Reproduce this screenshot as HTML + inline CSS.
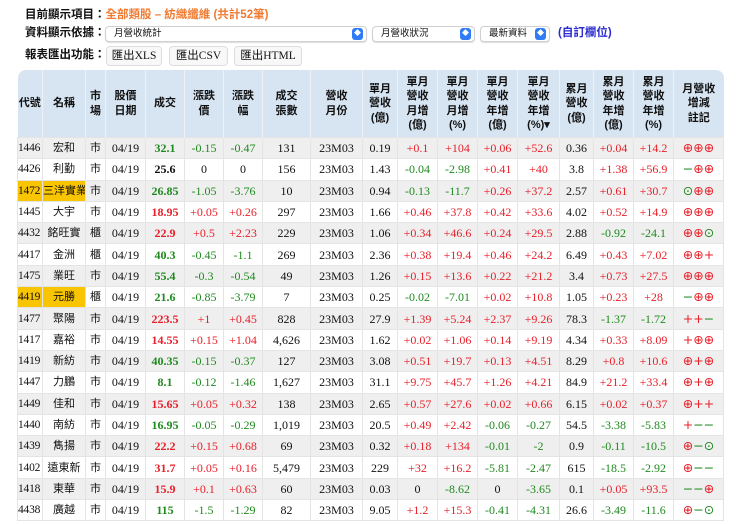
<!DOCTYPE html><html><head><meta charset="utf-8"><style>
body{margin:0;background:#fff;font-family:"Liberation Serif","Noto Serif CJK SC",serif;font-size:12px;color:#111;width:740px;height:524px;overflow:hidden;position:relative}
.l{position:absolute;font-family:"Liberation Sans","Noto Sans CJK TC",sans-serif;font-weight:bold;font-size:11.5px;left:25px;line-height:14px}
.sel{position:absolute;top:26px;height:14px;border:1px solid #d0d0d0;border-radius:4px;background:#fff;box-shadow:0 1px 1px #ddd;font-family:"Liberation Sans","Noto Sans CJK TC",sans-serif;font-size:9.5px;line-height:14px;padding-left:8px;box-sizing:content-box}
.sel i{position:absolute;right:3px;top:1px;width:11px;height:12px;background:#2f7cf6;border-radius:3px;color:#fff;font-style:normal;font-size:7px;line-height:12px;text-align:center}
.btn{position:absolute;top:46px;height:18px;border:1px solid #ddd;border-radius:4px;background:#f8f8f8;font-size:11.5px;line-height:18px;text-align:center;font-family:"Liberation Serif","Noto Sans CJK TC",serif}
table{position:absolute;left:17px;top:70px;border-collapse:collapse;width:706px;table-layout:fixed}
th{background:#d7e5f3;font-family:"Liberation Sans","Noto Sans CJK TC",sans-serif;font-size:11px;line-height:14.5px;height:67px;padding:0;border-left:1px solid #eef3f9;font-weight:bold}
th:first-child{border-top-left-radius:8px;border-left:none}th:last-child{border-top-right-radius:8px}
td{height:20.3px;line-height:18px;padding:0;text-align:center;border:1px solid #e4e4e4;white-space:nowrap;font-size:12px;overflow:hidden}
tr:nth-child(even) td{background:#efefef}
td:nth-child(2),td:nth-child(3){font-family:"Liberation Sans","Noto Sans CJK TC",sans-serif;font-size:11px}
td:first-child{text-align:left;padding-left:0;font-size:11.5px;letter-spacing:-0.2px}
td.y{background:#f9c400!important}
td:nth-child(5){font-weight:bold}
.g{color:#1f8a1f}.r{color:#e8202a}
td:last-child{font-family:"DejaVu Sans",sans-serif;font-size:12.5px;letter-spacing:0}
</style></head><body>
<div class="l" style="top:8px">目前顯示項目：<span style="color:#f07a30">全部類股 – 紡織纖維 (共計52筆)</span></div>
<div class="l" style="top:26px">資料顯示依據：</div>
<div class="sel" style="left:105px;width:252px">月營收統計<i>◆</i></div>
<div class="sel" style="left:372px;width:93px">月營收狀況<i>◆</i></div>
<div class="sel" style="left:480px;width:60px">最新資料<i>◆</i></div>
<div class="l" style="top:26px;left:558px;color:#2a2ad0">(自訂欄位)</div>
<div class="l" style="top:48px">報表匯出功能：</div>
<div class="btn" style="left:106px;width:54px">匯出XLS</div>
<div class="btn" style="left:169px;width:57px">匯出CSV</div>
<div class="btn" style="left:234px;width:66px">匯出HTML</div>
<table>
<colgroup><col style="width:25px"><col style="width:43px"><col style="width:20px"><col style="width:40px"><col style="width:39px"><col style="width:39px"><col style="width:39px"><col style="width:48px"><col style="width:52px"><col style="width:35px"><col style="width:40px"><col style="width:40px"><col style="width:40px"><col style="width:42px"><col style="width:34px"><col style="width:40px"><col style="width:40px"><col style="width:50px"></colgroup>
<tr><th>代號</th><th>名稱</th><th>市<br>場</th><th>股價<br>日期</th><th>成交</th><th>漲跌<br>價</th><th>漲跌<br>幅</th><th>成交<br>張數</th><th>營收<br>月份</th><th>單月<br>營收<br>(億)</th><th>單月<br>營收<br>月增<br>(億)</th><th>單月<br>營收<br>月增<br>(%)</th><th>單月<br>營收<br>年增<br>(億)</th><th>單月<br>營收<br>年增<br>(%)▾</th><th>累月<br>營收<br>(億)</th><th>累月<br>營收<br>年增<br>(億)</th><th>累月<br>營收<br>年增<br>(%)</th><th>月營收<br>增減<br>註記</th></tr>
<tr><td>1446</td><td>宏和</td><td>市</td><td>04/19</td><td class="g">32.1</td><td class="g">-0.15</td><td class="g">-0.47</td><td>131</td><td>23M03</td><td>0.19</td><td class="r">+0.1</td><td class="r">+104</td><td class="r">+0.06</td><td class="r">+52.6</td><td>0.36</td><td class="r">+0.04</td><td class="r">+14.2</td><td><span class="r">⊕⊕⊕</span></td></tr>
<tr><td>4426</td><td>利勤</td><td>市</td><td>04/19</td><td>25.6</td><td>0</td><td>0</td><td>156</td><td>23M03</td><td>1.43</td><td class="g">-0.04</td><td class="g">-2.98</td><td class="r">+0.41</td><td class="r">+40</td><td>3.8</td><td class="r">+1.38</td><td class="r">+56.9</td><td><span class="g">−</span><span class="r">⊕⊕</span></td></tr>
<tr><td class="y">1472</td><td class="y">三洋實業</td><td>市</td><td>04/19</td><td class="g">26.85</td><td class="g">-1.05</td><td class="g">-3.76</td><td>10</td><td>23M03</td><td>0.94</td><td class="g">-0.13</td><td class="g">-11.7</td><td class="r">+0.26</td><td class="r">+37.2</td><td>2.57</td><td class="r">+0.61</td><td class="r">+30.7</td><td><span class="g">⊙</span><span class="r">⊕⊕</span></td></tr>
<tr><td>1445</td><td>大宇</td><td>市</td><td>04/19</td><td class="r">18.95</td><td class="r">+0.05</td><td class="r">+0.26</td><td>297</td><td>23M03</td><td>1.66</td><td class="r">+0.46</td><td class="r">+37.8</td><td class="r">+0.42</td><td class="r">+33.6</td><td>4.02</td><td class="r">+0.52</td><td class="r">+14.9</td><td><span class="r">⊕⊕⊕</span></td></tr>
<tr><td>4432</td><td>銘旺實</td><td>櫃</td><td>04/19</td><td class="r">22.9</td><td class="r">+0.5</td><td class="r">+2.23</td><td>229</td><td>23M03</td><td>1.06</td><td class="r">+0.34</td><td class="r">+46.6</td><td class="r">+0.24</td><td class="r">+29.5</td><td>2.88</td><td class="g">-0.92</td><td class="g">-24.1</td><td><span class="r">⊕⊕</span><span class="g">⊙</span></td></tr>
<tr><td>4417</td><td>金洲</td><td>櫃</td><td>04/19</td><td class="g">40.3</td><td class="g">-0.45</td><td class="g">-1.1</td><td>269</td><td>23M03</td><td>2.36</td><td class="r">+0.38</td><td class="r">+19.4</td><td class="r">+0.46</td><td class="r">+24.2</td><td>6.49</td><td class="r">+0.43</td><td class="r">+7.02</td><td><span class="r">⊕⊕+</span></td></tr>
<tr><td>1475</td><td>業旺</td><td>市</td><td>04/19</td><td class="g">55.4</td><td class="g">-0.3</td><td class="g">-0.54</td><td>49</td><td>23M03</td><td>1.26</td><td class="r">+0.15</td><td class="r">+13.6</td><td class="r">+0.22</td><td class="r">+21.2</td><td>3.4</td><td class="r">+0.73</td><td class="r">+27.5</td><td><span class="r">⊕⊕⊕</span></td></tr>
<tr><td class="y">4419</td><td class="y">元勝</td><td>櫃</td><td>04/19</td><td class="g">21.6</td><td class="g">-0.85</td><td class="g">-3.79</td><td>7</td><td>23M03</td><td>0.25</td><td class="g">-0.02</td><td class="g">-7.01</td><td class="r">+0.02</td><td class="r">+10.8</td><td>1.05</td><td class="r">+0.23</td><td class="r">+28</td><td><span class="g">−</span><span class="r">⊕⊕</span></td></tr>
<tr><td>1477</td><td>聚陽</td><td>市</td><td>04/19</td><td class="r">223.5</td><td class="r">+1</td><td class="r">+0.45</td><td>828</td><td>23M03</td><td>27.9</td><td class="r">+1.39</td><td class="r">+5.24</td><td class="r">+2.37</td><td class="r">+9.26</td><td>78.3</td><td class="g">-1.37</td><td class="g">-1.72</td><td><span class="r">++</span><span class="g">−</span></td></tr>
<tr><td>1417</td><td>嘉裕</td><td>市</td><td>04/19</td><td class="r">14.55</td><td class="r">+0.15</td><td class="r">+1.04</td><td>4,626</td><td>23M03</td><td>1.62</td><td class="r">+0.02</td><td class="r">+1.06</td><td class="r">+0.14</td><td class="r">+9.19</td><td>4.34</td><td class="r">+0.33</td><td class="r">+8.09</td><td><span class="r">+⊕⊕</span></td></tr>
<tr><td>1419</td><td>新紡</td><td>市</td><td>04/19</td><td class="g">40.35</td><td class="g">-0.15</td><td class="g">-0.37</td><td>127</td><td>23M03</td><td>3.08</td><td class="r">+0.51</td><td class="r">+19.7</td><td class="r">+0.13</td><td class="r">+4.51</td><td>8.29</td><td class="r">+0.8</td><td class="r">+10.6</td><td><span class="r">⊕+⊕</span></td></tr>
<tr><td>1447</td><td>力鵬</td><td>市</td><td>04/19</td><td class="g">8.1</td><td class="g">-0.12</td><td class="g">-1.46</td><td>1,627</td><td>23M03</td><td>31.1</td><td class="r">+9.75</td><td class="r">+45.7</td><td class="r">+1.26</td><td class="r">+4.21</td><td>84.9</td><td class="r">+21.2</td><td class="r">+33.4</td><td><span class="r">⊕+⊕</span></td></tr>
<tr><td>1449</td><td>佳和</td><td>市</td><td>04/19</td><td class="r">15.65</td><td class="r">+0.05</td><td class="r">+0.32</td><td>138</td><td>23M03</td><td>2.65</td><td class="r">+0.57</td><td class="r">+27.6</td><td class="r">+0.02</td><td class="r">+0.66</td><td>6.15</td><td class="r">+0.02</td><td class="r">+0.37</td><td><span class="r">⊕++</span></td></tr>
<tr><td>1440</td><td>南紡</td><td>市</td><td>04/19</td><td class="g">16.95</td><td class="g">-0.05</td><td class="g">-0.29</td><td>1,019</td><td>23M03</td><td>20.5</td><td class="r">+0.49</td><td class="r">+2.42</td><td class="g">-0.06</td><td class="g">-0.27</td><td>54.5</td><td class="g">-3.38</td><td class="g">-5.83</td><td><span class="r">+</span><span class="g">−−</span></td></tr>
<tr><td>1439</td><td>雋揚</td><td>市</td><td>04/19</td><td class="r">22.2</td><td class="r">+0.15</td><td class="r">+0.68</td><td>69</td><td>23M03</td><td>0.32</td><td class="r">+0.18</td><td class="r">+134</td><td class="g">-0.01</td><td class="g">-2</td><td>0.9</td><td class="g">-0.11</td><td class="g">-10.5</td><td><span class="r">⊕</span><span class="g">−⊙</span></td></tr>
<tr><td>1402</td><td>遠東新</td><td>市</td><td>04/19</td><td class="r">31.7</td><td class="r">+0.05</td><td class="r">+0.16</td><td>5,479</td><td>23M03</td><td>229</td><td class="r">+32</td><td class="r">+16.2</td><td class="g">-5.81</td><td class="g">-2.47</td><td>615</td><td class="g">-18.5</td><td class="g">-2.92</td><td><span class="r">⊕</span><span class="g">−−</span></td></tr>
<tr><td>1418</td><td>東華</td><td>市</td><td>04/19</td><td class="r">15.9</td><td class="r">+0.1</td><td class="r">+0.63</td><td>60</td><td>23M03</td><td>0.03</td><td>0</td><td class="g">-8.62</td><td>0</td><td class="g">-3.65</td><td>0.1</td><td class="r">+0.05</td><td class="r">+93.5</td><td><span class="g">−−</span><span class="r">⊕</span></td></tr>
<tr><td>4438</td><td>廣越</td><td>市</td><td>04/19</td><td class="g">115</td><td class="g">-1.5</td><td class="g">-1.29</td><td>82</td><td>23M03</td><td>9.05</td><td class="r">+1.2</td><td class="r">+15.3</td><td class="g">-0.41</td><td class="g">-4.31</td><td>26.6</td><td class="g">-3.49</td><td class="g">-11.6</td><td><span class="r">⊕</span><span class="g">−⊙</span></td></tr>
</table>
</body></html>
